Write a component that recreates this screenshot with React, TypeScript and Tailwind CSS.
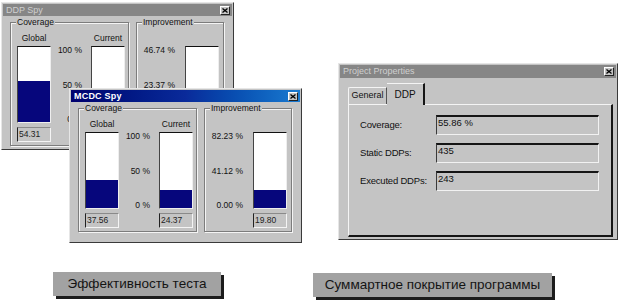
import React from 'react';

const font = "font-['Liberation_Sans',Arial,sans-serif]";

function CloseButton() {
  return (
    <div className="w-[10px] h-[9px] bg-[#c4c4c4] border-t border-l border-t-white border-l-white border-r border-b border-r-[#222] border-b-[#222] flex items-center justify-center">
      <svg width="6" height="5" viewBox="0 0 6 5">
        <path d="M0.5 0.5 L5.5 4.5 M5.5 0.5 L0.5 4.5" stroke="#000" strokeWidth="1.3" />
      </svg>
    </div>
  );
}

function TitleBar({ title, active, height }: { title: string; active: boolean; height: string }) {
  return (
    <div
      className={`${height} flex items-center justify-between pl-[3px] pr-[2px] ${
        active ? 'bg-linear-to-r from-[#00006e] via-[#0a2a9a] to-[#1a7ad0]' : 'bg-[#868686]'
      }`}
    >
      <span
        className={
          active
            ? 'text-white font-bold text-[9px] leading-none tracking-[0.2px]'
            : 'text-[#cfcfcf] text-[9px] leading-none'
        }
      >
        {title}
      </span>
      <CloseButton />
    </div>
  );
}

function GroupBox({ label, width, children }: { label: string; width: string; children: React.ReactNode }) {
  return (
    <div
      className={`relative ${width} h-[124px] border border-[#7c7c7c] shadow-[inset_1px_1px_0_#f4f4f4,1px_1px_0_#f4f4f4]`}
    >
      <span className="absolute -top-[6px] left-[5px] bg-[#c4c4c4] px-[1px] text-[8.5px] leading-[10px] text-[#111]">
        {label}
      </span>
      {children}
    </div>
  );
}

function Bar({ percent }: { percent: number }) {
  return (
    <div className="w-[34px] h-[77px] bg-white border-t border-l border-t-[#111] border-l-[#444] border-r border-b border-r-[#eee] border-b-[#eee] flex flex-col justify-end">
      <div className="bg-[#06067c] w-full" style={{ height: `${percent}%` }} />
    </div>
  );
}

function ValueBox({ value }: { value: string }) {
  return (
    <div className="mt-[4px] w-[34px] h-[15px] border-l border-t border-l-[#222] border-t-[#8a8a8a] border-r border-b border-r-[#f4f4f4] border-b-[#f4f4f4] flex items-center pl-[1px] text-[8.5px] text-[#222]">
      {value}
    </div>
  );
}

function Scale({ labels, width }: { labels: string[]; width: string }) {
  return (
    <div className={`${width} pt-[13px] h-[92px] flex flex-col justify-between items-end text-[8.5px] leading-[10px] text-[#111] whitespace-nowrap`}>
      {labels.map((l) => (
        <span key={l}>{l}</span>
      ))}
    </div>
  );
}

function SpyWindow({
  title,
  active,
  height,
  global,
  current,
  improvement,
  impScale,
}: {
  title: string;
  active: boolean;
  height: string;
  global: number;
  current: number;
  improvement: number;
  impScale: string[];
}) {
  const impMax = parseFloat(impScale[0]);
  return (
    <div className={`w-[233px] ${height} bg-[#c4c4c4] border border-t-[#e6e6e6] border-l-[#e6e6e6] border-r-[#3a3a3a] border-b-[#3a3a3a] p-[1px] flex flex-col`}>
      <TitleBar title={title} active={active} height="h-[12px]" />
      <div className="flex gap-[7px] pl-[7px] mt-[6px]">
        <GroupBox label="Coverage" width="w-[119px]">
          <div className="flex items-start pl-[6px] pt-[9px]">
            <div className="w-[34px] flex flex-col items-center">
              <span className="h-[12px] text-[8.5px] leading-[12px] text-[#111]">Global</span>
              <div className="mt-[2px]">
                <Bar percent={global} />
              </div>
              <ValueBox value={global.toFixed(2)} />
            </div>
            <Scale labels={['100 %', '50 %', '0 %']} width="w-[31px]" />
            <div className="ml-[9px] w-[34px] flex flex-col items-center">
              <span className="h-[12px] text-[8.5px] leading-[12px] text-[#111] whitespace-nowrap">Current</span>
              <div className="mt-[2px]">
                <Bar percent={current} />
              </div>
              <ValueBox value={current.toFixed(2)} />
            </div>
          </div>
        </GroupBox>
        <GroupBox label="Improvement" width="w-[88px]">
          <div className="flex items-start pt-[9px]">
            <Scale labels={impScale} width="w-[38px]" />
            <div className="ml-[10px] w-[34px] flex flex-col items-center">
              <span className="h-[12px]" />
              <div className="mt-[2px]">
                <Bar percent={(improvement / impMax) * 100} />
              </div>
              <ValueBox value={improvement.toFixed(2)} />
            </div>
          </div>
        </GroupBox>
      </div>
    </div>
  );
}

function Field({ label, value }: { label: string; value: string }) {
  return (
    <div className="flex items-center">
      <span className="w-[76px] text-[9.5px] text-[#111] tracking-[-0.2px]">{label}</span>
      <div className="w-[163px] h-[20px] border-t-2 border-t-[#151515] border-l border-l-[#3a3a3a] border-r border-b border-r-[#f2f2f2] border-b-[#f2f2f2] pl-[1px] text-[9.5px] leading-[12px] text-[#111]">
        {value}
      </div>
    </div>
  );
}

function ProjectWindow() {
  return (
    <div className="w-[280px] h-[177px] bg-[#c4c4c4] border border-t-[#e6e6e6] border-l-[#e6e6e6] border-r-[#3a3a3a] border-b-[#3a3a3a] p-[1px] flex flex-col">
      <TitleBar title="Project Properties" active={false} height="h-[13px]" />
      <div className="pl-[8px] mt-[5px]">
        <div className="flex items-end h-[21px]">
          <div className="w-[39px] h-[17px] border-t border-l border-t-[#f4f4f4] border-l-[#f4f4f4] border-r border-r-[#555] rounded-tl-[2px] flex items-center justify-center text-[9px] text-[#111]">
            General
          </div>
          <div className="relative z-10 w-[38px] h-[22px] -mb-[1px] bg-[#c4c4c4] border-t border-t-[#f4f4f4] border-r-2 border-r-[#151515] flex items-center justify-center text-[10px] text-[#111]">
            DDP
          </div>
        </div>
        <div className="w-[265px] h-[133px] border-t border-l border-t-[#f4f4f4] border-l-[#f4f4f4] border-r-2 border-b-2 border-r-[#151515] border-b-[#151515] flex flex-col gap-[8px] pt-[10px] pl-[11px]">
          <Field label="Coverage:" value="55.86 %" />
          <Field label="Static DDPs:" value="435" />
          <Field label="Executed DDPs:" value="243" />
        </div>
      </div>
    </div>
  );
}

export default function App() {
  return (
    <div className={`relative w-[625px] h-[306px] bg-white overflow-hidden ${font}`}>
      <div className="relative h-[268px]">
        <div className="absolute left-[1px] top-[2px]">
          <SpyWindow
            title="DDP Spy"
            active={false}
            height="h-[148px]"
            global={54.31}
            current={30.12}
            improvement={9.35}
            impScale={['46.74 %', '23.37 %', '0.00 %']}
          />
        </div>
        <div className="absolute left-[69px] top-[88px]">
          <SpyWindow
            title="MCDC Spy"
            active
            height="h-[155px]"
            global={37.56}
            current={24.37}
            improvement={19.8}
            impScale={['82.23 %', '41.12 %', '0.00 %']}
          />
        </div>
        <div className="absolute left-[338px] top-[63px]">
          <ProjectWindow />
        </div>
      </div>
      <div className="flex items-start pt-[4px]">
        <div className="ml-[53px] w-[168px] h-[24px] bg-[#a2a2a2] shadow-[3px_3px_0_#1c1c1c] flex items-center justify-center text-[13.5px] text-[#141414] whitespace-nowrap">
          Эффективность теста
        </div>
        <div className="ml-[92px] mt-[1px] w-[239px] h-[24px] bg-[#a2a2a2] shadow-[3px_3px_0_#1c1c1c] flex items-center justify-center text-[13.5px] text-[#141414] whitespace-nowrap">
          Суммартное покрытие программы
        </div>
      </div>
    </div>
  );
}
